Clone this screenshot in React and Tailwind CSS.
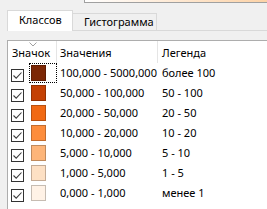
import React from "react";

const rows = [
  { fill: "#7c2705", line: "#5e1d03", range: "100,000 - 5000,000", legend: "более 100" },
  { fill: "#c44104", line: "#933102", range: "50,000 - 100,000", legend: "50 - 100" },
  { fill: "#f16913", line: "#b8500f", range: "20,000 - 50,000", legend: "20 - 50" },
  { fill: "#fd8d3c", line: "#c26c2e", range: "10,000 - 20,000", legend: "10 - 20" },
  { fill: "#fdb579", line: "#c08a5c", range: "5,000 - 10,000", legend: "5 - 10" },
  { fill: "#fde0c4", line: "#c4ab95", range: "1,000 - 5,000", legend: "1 - 5" },
  { fill: "#fff2e6", line: "#c6bcb2", range: "0,000 - 1,000", legend: "менее 1" },
];

function Check() {
  return (
    <div className="w-[13px] h-[13px] border border-[#333333] bg-white flex items-center justify-center">
      <svg width="11" height="11" viewBox="0 0 11 11">
        <path d="M1.5 5.5 L4.2 8.2 L9.5 2.5" fill="none" stroke="#3c3c3c" strokeWidth="1.1" />
      </svg>
    </div>
  );
}

export default function App() {
  return (
    <div
      className="w-[267px] h-[209px] bg-[#f0f0f0] overflow-hidden flex flex-col text-[11px] text-black whitespace-nowrap"
      style={{ fontFamily: '"Noto Sans", "Open Sans", sans-serif' }}
    >
      {/* top strip of the panel above */}
      <div className="ml-[84px] h-[3px] border-l border-b border-[#a0a0a0] bg-gradient-to-r from-white to-[#fcd2a6]" />

      {/* tabs */}
      <div className="mt-[7px] h-[21px] flex items-end">
        <div className="w-[7px] h-full border-b border-transparent" />
        <div className="relative z-10 w-[66px] h-[21px] bg-white border border-b-0 border-[#d9d9d9] flex items-center pl-[11px] pb-[1px]">
          Классов
        </div>
        <div className="w-[84px] h-[18px] border border-l-0 border-[#d9d9d9] flex items-center pl-[11px]">
          Гистограмма
        </div>
        <div className="flex-1 h-full border-b border-[#d9d9d9]" />
      </div>

      {/* list view */}
      <div className="mt-[9px] ml-[7px] flex-1 bg-white border-l border-t border-[#adadad] flex flex-col">
        <div className="h-[22px] flex">
          <div className="relative w-[49px] border-r border-[#e5e5e5] flex items-center pl-[4px] pt-[3px]">
            Значок
            <svg className="absolute left-[21px] top-[1px]" width="8" height="5" viewBox="0 0 8 5">
              <path d="M0.5 0.5 L4 4 L7.5 0.5" fill="none" stroke="#a0a0a0" strokeWidth="1" />
            </svg>
          </div>
          <div className="w-[101px] border-r border-[#e5e5e5] flex items-center pl-[3px] pt-[3px]">Значения</div>
          <div className="flex-1 flex items-center pl-[4px] pt-[3px]">Легенда</div>
        </div>

        {rows.map((r, i) => (
          <div key={i} className="h-[20px] flex">
            <div className="w-[49px] flex items-start">
              <div className="ml-[3px] mt-[6px]">
                <Check />
              </div>
              <div
                className={`ml-[5px] h-[20px] w-[28px] pl-[1px] pt-[1px] border ${
                  i === 0 ? "border-dotted border-black" : "border-transparent"
                }`}
              >
                <div className="w-[15px] h-[16px] border" style={{ background: r.fill, borderColor: r.line }} />
              </div>
            </div>
            <div className="w-[101px] flex items-center pl-[3px]">{r.range}</div>
            <div className="flex-1 flex items-center pl-[4px]">{r.legend}</div>
          </div>
        ))}
      </div>
    </div>
  );
}
